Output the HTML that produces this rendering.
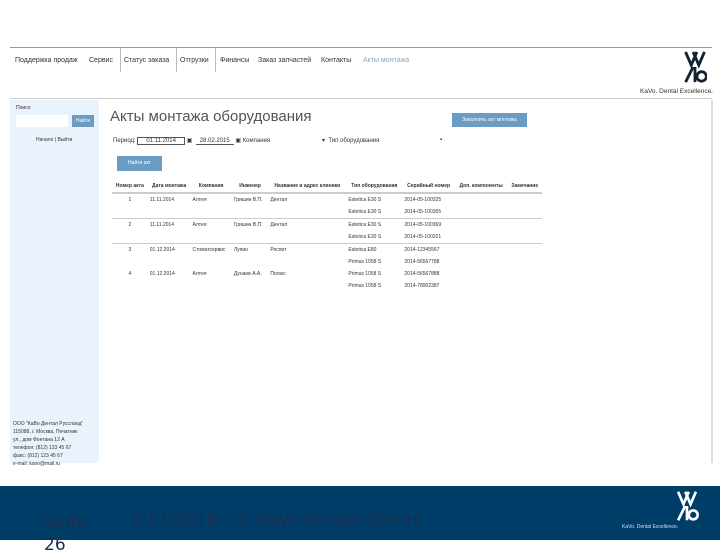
<!DOCTYPE html>
<html><head><meta charset="utf-8"><style>
body{margin:0;width:720px;height:540px;background:#fff;position:relative;overflow:hidden;font-family:"Liberation Sans",sans-serif;}
.a{position:absolute;white-space:nowrap;}
.nav{font-size:7px;color:#333;top:57px;}
.sep{position:absolute;top:48px;width:1px;height:24px;background:#bbb;}
.t{font-size:5px;color:#333;}
td,th{font-size:5px;padding:0 2px;height:12px;color:#333;white-space:nowrap;}
</style></head><body>
<div class="a" style="left:10px;top:47px;width:702px;height:1px;background:#999"></div>
<div class="a nav" style="left:15px">Поддержка продаж</div>
<div class="a nav" style="left:89px">Сервис</div>
<div class="sep" style="left:120px"></div>
<div class="a nav" style="left:124px">Статус заказа</div>
<div class="sep" style="left:176px"></div>
<div class="a nav" style="left:180px">Отгрузки</div>
<div class="sep" style="left:215px"></div>
<div class="a nav" style="left:220px">Финансы</div>
<div class="a nav" style="left:258px">Заказ запчастей</div>
<div class="a nav" style="left:321px">Контакты</div>
<div class="a nav" style="left:363px;color:#8ab">Акты монтажа</div>
<svg class="a" style="left:683px;top:50px" width="24" height="34" viewBox="0 0 24 36"><path d="M2 2 L8 16 L14 2 M10 2 L16 16 L22 2 M2 34 L10 18 M12 18 L12 34 M14 28 a5 5 0 1 0 10 0 a5 5 0 1 0 -10 0" stroke="#123" stroke-width="3" fill="none"/></svg>
<div class="a" style="left:640px;top:88px;font-size:6.5px;color:#333">KaVo. Dental Excellence.</div>
<div class="a" style="left:10px;top:98px;width:702px;height:1px;background:#ccc"></div>
<div class="a" style="left:10px;top:100px;width:89px;height:363px;background:#eaf2fb"></div>
<div class="a t" style="left:16px;top:105px">Поиск:</div>
<div class="a" style="left:16px;top:115px;width:52px;height:12px;background:#fff"></div>
<div class="a" style="left:72px;top:115px;width:22px;height:12px;background:#6b9cc4;color:#fff;font-size:5px;text-align:center;line-height:12px">Найти</div>
<div class="a t" style="left:36px;top:137px">Начало | Выйти</div>
<div class="a t" style="left:13px;top:420px;line-height:8px;font-size:5px">ООО "КаВо Дентал Руссланд"<br>115088, г. Москва, Печатник<br>ул., дом Фонтана 12 А<br>телефон: (812) 123 45 67<br>факс: (812) 123 45 67<br>e-mail: kavo@mail.ru</div>
<div class="a" style="left:110px;top:108px;font-size:15px;color:#555">Акты монтажа оборудования</div>
<div class="a" style="left:452px;top:113px;width:75px;height:14px;background:#6b9cc4;color:#fff;font-size:5px;text-align:center;line-height:14px">Заполнить акт монтажа</div>
<div class="a t" style="left:113px;top:137px;font-size:6px">Период: <span style="border:1px solid #555;padding:0 8px">01.11.2014</span> ▣ &nbsp;<span style="border-bottom:1px solid #555;padding:0 4px">28.02.2015</span> ▣ Компания</div>
<div class="a t" style="left:322px;top:137px;font-size:6px">▾ &nbsp;Тип оборудования</div>
<div class="a t" style="left:440px;top:137px;font-size:6px">▪</div>
<div class="a" style="left:117px;top:156px;width:45px;height:15px;background:#6b9cc4;color:#fff;font-size:5px;text-align:center;line-height:15px">Найти акт</div>
<table class="a" style="left:112px;top:180px;border-collapse:collapse;width:430px">
<tr style="border-bottom:2px solid #ccc"><th>Номер акта</th><th>Дата монтажа</th><th>Компания</th><th>Инженер</th><th>Название и адрес клиники</th><th>Тип оборудования</th><th>Серийный номер</th><th>Доп. компоненты</th><th>Замечание</th></tr>
<tr><td align=center>1</td><td>11.11.2014</td><td>Алтея</td><td>Гришин В.П.</td><td>Дентал</td><td>Estetica E30 S</td><td>2014-05-100325</td><td></td><td></td></tr>
<tr style="border-bottom:1px solid #ccc"><td></td><td></td><td></td><td></td><td></td><td>Estetica E30 S</td><td>2014-05-100365</td><td></td><td></td></tr>
<tr><td align=center>2</td><td>11.11.2014</td><td>Алтея</td><td>Гришин В.П.</td><td>Дентал</td><td>Estetica E30 S</td><td>2014-05-100369</td><td></td><td></td></tr>
<tr style="border-bottom:1px solid #ccc"><td></td><td></td><td></td><td></td><td></td><td>Estetica E30 S</td><td>2014-05-100321</td><td></td><td></td></tr>
<tr><td align=center>3</td><td>01.12.2014</td><td>Стоматсервис</td><td>Лупин</td><td>Роспит</td><td>Estetica E80</td><td>2014-12345567</td><td></td><td></td></tr>
<tr><td></td><td></td><td></td><td></td><td></td><td>Primus 1058 S</td><td>2014-56567788</td><td></td><td></td></tr>
<tr><td align=center>4</td><td>01.12.2014</td><td>Алтея</td><td>Дунаев А.А.</td><td>Полюс</td><td>Primus 1058 S</td><td>2014-56567888</td><td></td><td></td></tr>
<tr><td></td><td></td><td></td><td></td><td></td><td>Primus 1058 S</td><td>2014-78902387</td><td></td><td></td></tr>
</table>
<div class="a" style="left:711px;top:100px;width:2px;height:363px;background:#ddd"></div>
<div class="a" style="left:0;top:486px;width:720px;height:54px;background:#003e6a"></div>
<div class="a" style="left:44px;top:511px;font-size:17px;line-height:23px;color:#1e2d4d;font-family:'DejaVu Sans',sans-serif">Seite<br>26</div>
<div class="a" style="left:130px;top:511px;font-size:17px;color:#1e2d4d;font-family:'DejaVu Sans',sans-serif">2/17/2018 - © KaVo Dental GmbH</div>
<svg class="a" style="left:675px;top:490px" width="24" height="32" viewBox="0 0 24 36"><path d="M2 2 L8 16 L14 2 M10 2 L16 16 L22 2 M2 34 L10 18 M12 18 L12 34 M14 28 a5 5 0 1 0 10 0 a5 5 0 1 0 -10 0" stroke="#fff" stroke-width="3" fill="none"/></svg>
<div class="a" style="left:622px;top:524px;font-size:5px;color:#dde">KaVo. Dental Excellence.</div>
</body></html>
